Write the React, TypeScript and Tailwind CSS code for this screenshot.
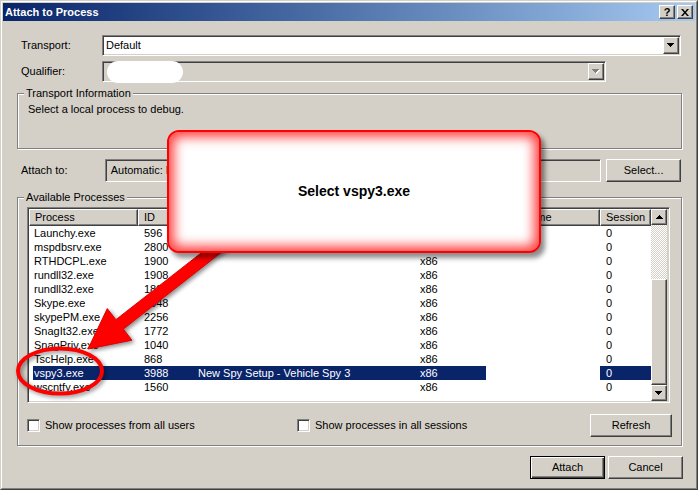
import React from "react";

const raised =
  "border border-t-white border-l-white border-r-[#404040] border-b-[#404040] shadow-[inset_-1px_-1px_0_#808080] bg-[#d4d0c8]";
const sunken =
  "border border-t-[#808080] border-l-[#808080] border-r-white border-b-white shadow-[inset_1px_1px_0_#404040,inset_-1px_-1px_0_#d4d0c8]";
const etched = "border border-[#808080] shadow-[inset_1px_1px_0_#ffffff,1px_1px_0_#ffffff]";

function Down({ gray }: { gray?: boolean }) {
  const d = "M0 0h7v1H0zM1 1h5v1H1zM2 2h3v1H2zM3 3h1v1H3z";
  return (
    <svg width="8" height="5" viewBox="0 0 8 5">
      {gray && <path d={d} fill="#ffffff" transform="translate(1 1)" />}
      <path d={d} fill={gray ? "#808080" : "#000000"} />
    </svg>
  );
}

function Up() {
  return (
    <svg width="7" height="4" viewBox="0 0 7 4">
      <path d="M3 0h1v1H3zM2 1h3v1H2zM1 2h5v1H1zM0 3h7v1H0z" fill="#000000" />
    </svg>
  );
}

const rows: [string, string][] = [
  ["Launchy.exe", "596"],
  ["mspdbsrv.exe", "2800"],
  ["RTHDCPL.exe", "1900"],
  ["rundll32.exe", "1908"],
  ["rundll32.exe", "1884"],
  ["Skype.exe", "3648"],
  ["skypePM.exe", "2256"],
  ["SnagIt32.exe", "1772"],
  ["SnagPriv.exe", "1040"],
  ["TscHelp.exe", "868"],
  ["vspy3.exe", "3988"],
  ["wscntfy.exe", "1560"],
];

function Row({ name, id }: { name: string; id: string }) {
  const sel = name === "vspy3.exe";
  if (sel) {
    return (
      <div className="flex h-[14px] leading-[14px]">
        <div className="w-[109px] pl-[4px]">
          <div className="h-full bg-[#0a246a] text-white pl-[1px]">{name}</div>
        </div>
        <div className="w-[54px] bg-[#0a246a] text-white pl-[6px]">{id}</div>
        <div className="w-[222px] bg-[#0a246a] text-white pl-[6px] whitespace-nowrap">New Spy Setup - Vehicle Spy 3</div>
        <div className="w-[72px] bg-[#0a246a] text-white pl-[6px]">x86</div>
        <div className="w-[114px]" />
        <div className="w-[51px] bg-[#0a246a] text-white pl-[6px]">0</div>
      </div>
    );
  }
  return (
    <div className="flex h-[14px] leading-[14px]">
      <div className="w-[109px] pl-[5px]">{name}</div>
      <div className="w-[54px] pl-[6px]">{id}</div>
      <div className="w-[222px]" />
      <div className="w-[76px] pl-[6px]">x86</div>
      <div className="w-[110px]" />
      <div className="w-[51px] pl-[6px]">0</div>
    </div>
  );
}

function Header({ w, label }: { w: string; label: string }) {
  return (
    <div className={`${raised} ${w} h-[17px] flex items-center pl-[5px] whitespace-nowrap overflow-hidden`}>{label}</div>
  );
}

export default function App() {
  return (
    <div className="font-['Liberation_Sans',Arial,sans-serif] text-[11px] text-black">
      <div className="relative w-[698px] h-[490px] border border-t-[#d4d0c8] border-l-[#d4d0c8] border-r-[#404040] border-b-[#404040] bg-[#d4d0c8]">
        <div className="h-full border border-t-white border-l-white border-r-[#808080] border-b-[#808080] p-px flex flex-col">
          {/* Title bar */}
          <div className="h-[18px] bg-linear-to-r from-[#0a246a] to-[#a6caf0] flex items-center pl-[2px] pr-[2px]">
            <span className="text-white font-bold leading-[18px]">Attach to Process</span>
            <div className="ml-auto flex gap-[2px]">
              <div className={`${raised} w-[16px] h-[14px] flex items-center justify-center font-bold text-[11px] leading-none`}>?</div>
              <div className={`${raised} w-[16px] h-[14px] flex items-center justify-center`}>
                <svg width="8" height="7" viewBox="0 0 8 7">
                  <path d="M0 0h2l2 2.5L6 0h2L5 3.5 8 7H6L4 4.5 2 7H0l3-3.5z" fill="#000000" />
                </svg>
              </div>
            </div>
          </div>

          <div className="px-[14px] flex flex-col">
            {/* Transport */}
            <div className="flex items-center mt-[14px] h-[21px]">
              <div className="ml-[4px] w-[81px]">Transport:</div>
              <div className={`${sunken} w-[579px] h-[21px] p-px flex`}>
                <div className="flex-1 bg-white flex items-center pl-[2px]">Default</div>
                <div className={`${raised} w-[16px] h-[17px] flex items-center justify-center`}>
                  <Down />
                </div>
              </div>
            </div>

            {/* Qualifier */}
            <div className="flex items-center mt-[5px] h-[21px]">
              <div className="ml-[4px] w-[81px]">Qualifier:</div>
              <div className={`${sunken} w-[504px] h-[21px] p-px flex items-center`}>
                <div className="ml-[3px] w-[76px] h-[22px] rounded-[11px] bg-white" />
                <div className="flex-1" />
                <div className={`${raised} w-[16px] h-[17px] flex items-center justify-center`}>
                  <Down gray />
                </div>
              </div>
            </div>

            {/* Transport Information */}
            <fieldset className={`${etched} w-[665px] mt-[5px] pl-[6px] pr-[6px] pt-[3px] pb-[32px] min-w-0`}>
              <legend className="px-[2px] leading-[13px] bg-[#d4d0c8]">Transport Information</legend>
              <div className="ml-[4px] leading-[13px]">Select a local process to debug.</div>
            </fieldset>

            {/* Attach to */}
            <div className="flex items-center mt-[9px] h-[24px]">
              <div className="ml-[4px] w-[84px]">Attach to:</div>
              <div className={`${sunken} w-[498px] h-[23px] p-px`}>
                <div className="h-full flex items-center pl-[4px] bg-[#d4d0c8]">Automatic: Native code</div>
              </div>
              <div className={`${raised} ml-[5px] w-[75px] h-[23px] flex items-center justify-center`}>Select...</div>
            </div>

            {/* Available Processes */}
            <fieldset className={`${etched} w-[665px] mt-[9px] pl-[9px] pr-[9px] pt-[3px] pb-[8px] min-w-0`}>
              <legend className="ml-[-3px] px-[2px] leading-[13px] bg-[#d4d0c8]">Available Processes</legend>
              <div className={`${sunken} w-[643px] h-[196px] p-px flex`}>
                <div className="w-[622px] bg-white flex flex-col overflow-hidden">
                  <div className="flex h-[17px] shrink-0">
                    <Header w="w-[109px]" label="Process" />
                    <Header w="w-[54px]" label="ID" />
                    <Header w="w-[222px]" label="Title" />
                    <Header w="w-[76px]" label="Type" />
                    <Header w="w-[110px]" label="User Name" />
                    <Header w="w-[51px]" label="Session" />
                  </div>
                  {rows.map(([n, i], k) => (
                    <Row key={k} name={n} id={i} />
                  ))}
                </div>
                <div className="w-[16px] flex flex-col">
                  <div className={`${raised} h-[16px] flex items-center justify-center`}>
                    <Up />
                  </div>
                  <div className="h-[54px] bg-[image:repeating-conic-gradient(#d4d0c8_0%_25%,#ffffff_0%_50%)] bg-[length:2px_2px]" />
                  <div className={`${raised} h-[106px]`} />
                  <div className={`${raised} h-[16px] flex items-center justify-center`}>
                    <Down />
                  </div>
                </div>
              </div>
              <div className="flex items-center mt-[11px] h-[23px]">
                <div className="w-[270px] flex items-center">
                  <div className={`${sunken} w-[13px] h-[13px] bg-white`} />
                  <span className="ml-[5px]">Show processes from all users</span>
                </div>
                <div className="flex items-center">
                  <div className={`${sunken} w-[13px] h-[13px] bg-white`} />
                  <span className="ml-[5px]">Show processes in all sessions</span>
                </div>
                <div className={`${raised} ml-auto w-[82px] h-[23px] flex items-center justify-center`}>Refresh</div>
              </div>
            </fieldset>

            {/* Buttons */}
            <div className="flex justify-end gap-[3px] mt-[10px] mr-[-2px]">
              <div className="w-[75px] h-[23px] border border-black bg-[#d4d0c8] shadow-[inset_1px_1px_0_#ffffff,inset_-1px_-1px_0_#404040,inset_-2px_-2px_0_#808080] flex items-center justify-center">
                Attach
              </div>
              <div className={`${raised} w-[75px] h-[23px] flex items-center justify-center`}>Cancel</div>
            </div>
          </div>
        </div>

        {/* Annotations */}
        <svg
          className="absolute left-[-1px] top-[-1px] pointer-events-none drop-shadow-[2px_2px_2px_rgba(0,0,0,0.45)]"
          width="698"
          height="490"
          viewBox="0 0 698 490"
        >
          <ellipse cx="60" cy="371" rx="42" ry="22.5" fill="none" stroke="#ff0000" strokeWidth="4" />
          <polygon
            points="88,349 107.3,308.6 115.9,319.7 226.3,233.3 233.7,242.7 123.3,329.1 131.9,340.2"
            fill="#ff0000"
            stroke="#e00000"
            strokeWidth="1"
            strokeLinejoin="round"
          />
        </svg>

        <div className="absolute left-[166px] top-[129px] w-[374px] h-[123px] rounded-[12px] border-2 border-[#ff0000] bg-white shadow-[inset_0_0_12px_5px_rgba(255,0,0,0.75),4px_5px_5px_rgba(0,0,0,0.45)] flex items-center justify-center">
          <span className="font-bold text-[14px] text-black">Select vspy3.exe</span>
        </div>
      </div>
    </div>
  );
}
